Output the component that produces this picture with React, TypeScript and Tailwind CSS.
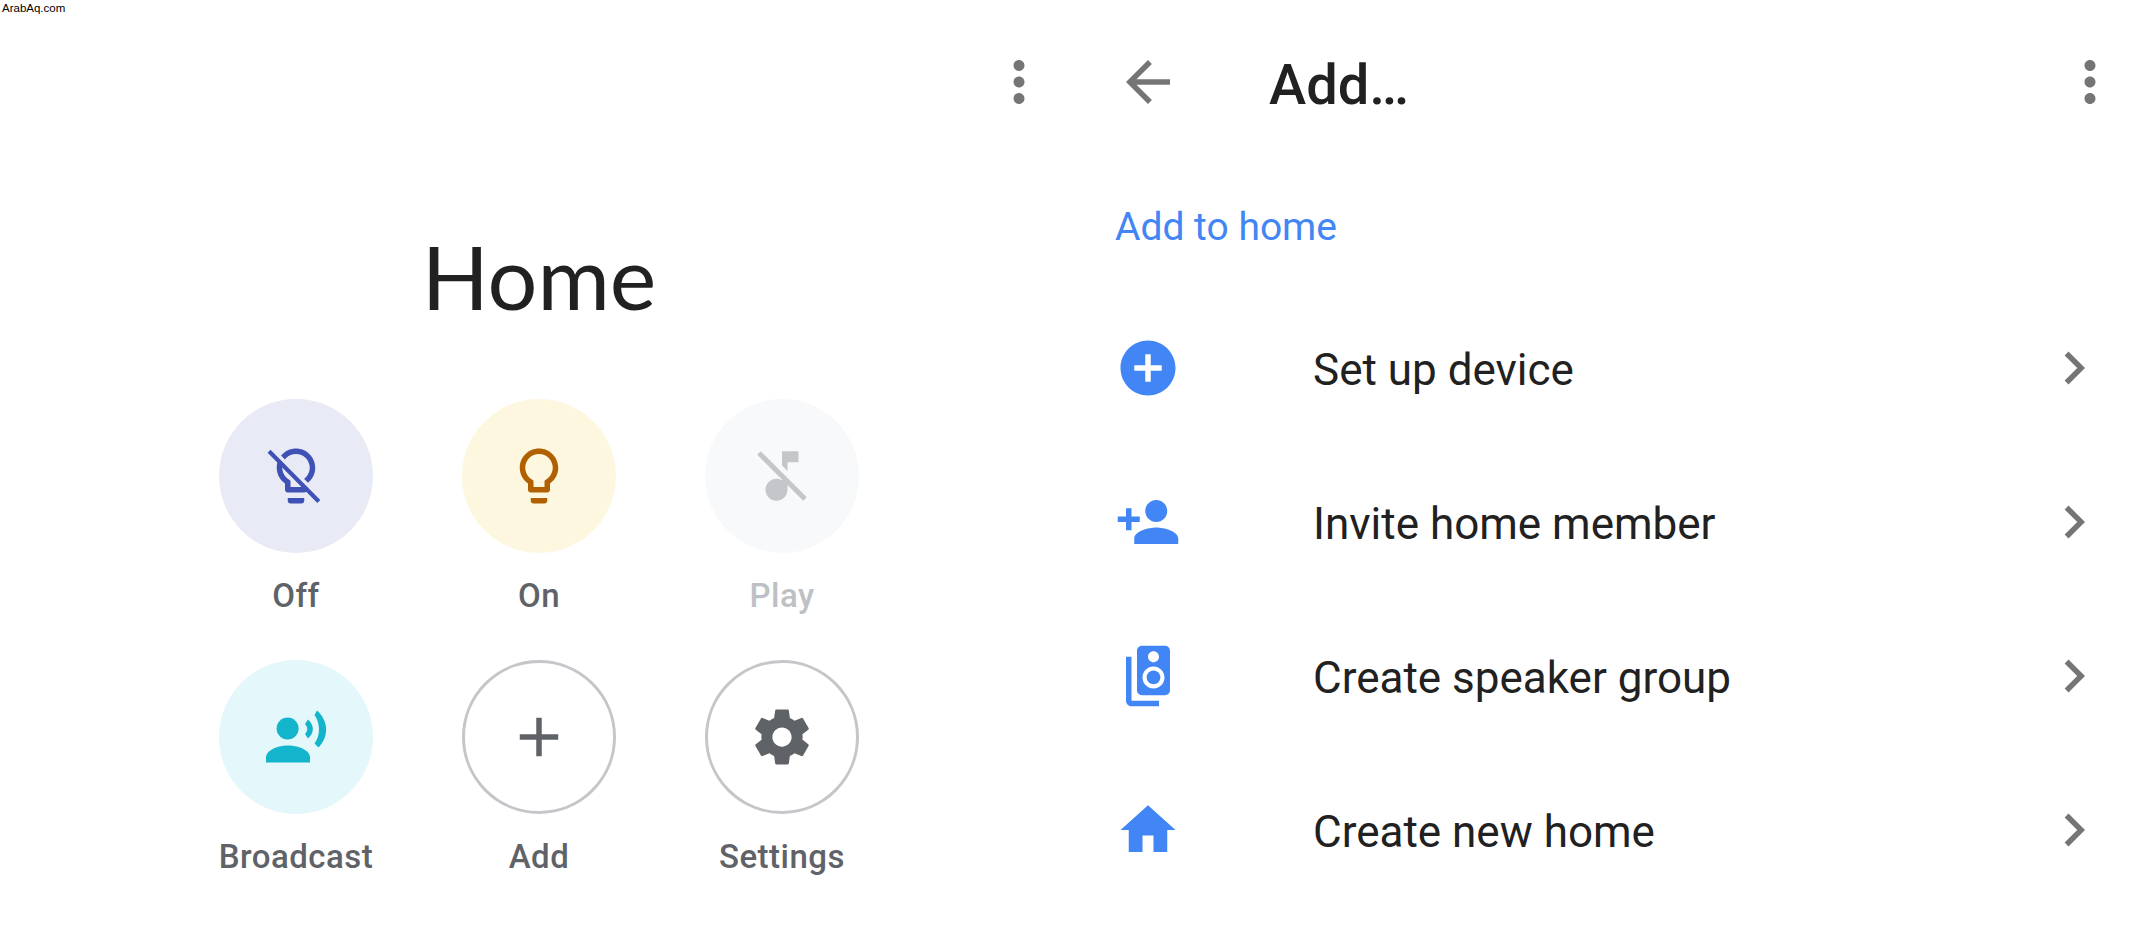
import React from "react";

const P = {
  bulb: "M9 21c0 .55.45 1 1 1h4c.55 0 1-.45 1-1v-1H9v1zm3-19C8.14 2 5 5.14 5 9c0 2.38 1.19 4.47 3 5.74V17c0 .55.45 1 1 1h6c.55 0 1-.45 1-1v-2.26c1.81-1.27 3-3.36 3-5.74 0-3.86-3.14-7-7-7zm2.85 11.1l-.85.6V16h-4v-2.3l-.85-.6C7.8 12.16 7 10.63 7 9c0-2.76 2.24-5 5-5s5 2.24 5 5c0 1.63-.8 3.16-2.15 4.1z",
  musicOff: "M4.27 3L3 4.27l9 9v.28c-.59-.34-1.27-.55-2-.55-2.21 0-4 1.79-4 4s1.79 4 4 4 4-1.79 4-4v-1.73L19.73 21 21 19.73 4.27 3zM14 7h4V3h-6v5.18l2 2z",
  add: "M19 13h-6v6h-2v-6H5v-2h6V5h2v6h6v2z",
  gear: "M19.43 12.98c.04-.32.07-.64.07-.98s-.03-.66-.07-.98l2.11-1.65c.19-.15.24-.42.12-.64l-2-3.46c-.12-.22-.39-.3-.61-.22l-2.49 1c-.52-.4-1.08-.73-1.69-.98l-.38-2.65C14.46 2.18 14.25 2 14 2h-4c-.25 0-.46.18-.49.42l-.38 2.65c-.61.25-1.17.59-1.69.98l-2.49-1c-.23-.09-.49 0-.61.22l-2 3.46c-.13.22-.07.49.12.64l2.11 1.65c-.04.32-.07.65-.07.98s.03.66.07.98l-2.11 1.65c-.19.15-.24.42-.12.64l2 3.46c.12.22.39.3.61.22l2.49-1c.52.4 1.08.73 1.69.98l.38 2.65c.03.24.24.42.49.42h4c.25 0 .46-.18.49-.42l.38-2.65c.61-.25 1.17-.59 1.69-.98l2.49 1c.23.09.49 0 .61-.22l2-3.46c.12-.22.07-.49-.12-.64l-2.01-1.65zM12 15.5c-1.93 0-3.5-1.57-3.5-3.5s1.57-3.5 3.5-3.5 3.5 1.57 3.5 3.5-1.57 3.5-3.5 3.5z",
  addCircle: "M12 2C6.48 2 2 6.48 2 12s4.48 10 10 10 10-4.48 10-10S17.52 2 12 2zm5 11h-4v4h-2v-4H7v-2h4V7h2v4h4v2z",
  personAdd: "M15 12c2.21 0 4-1.79 4-4s-1.79-4-4-4-4 1.79-4 4 1.79 4 4 4zm-9-2V7H4v3H1v2h3v3h2v-3h3v-2H6zm9 4c-2.67 0-8 1.34-8 4v2h16v-2c0-2.66-5.33-4-8-4z",
  speaker: "M18.2 1H9.8C8.81 1 8 1.81 8 2.8v14.4c0 .99.81 1.79 1.8 1.79l8.4.01c.99 0 1.8-.81 1.8-1.8V2.8c0-.99-.81-1.8-1.8-1.8zM14 3c1.1 0 2 .89 2 2s-.9 2-2 2-2-.89-2-2 .9-2 2-2zm0 13.5c-2.21 0-4-1.79-4-4s1.79-4 4-4 4 1.79 4 4-1.79 4-4 4z",
  speaker2: "M6 5H4v16c0 1.1.89 2 2 2h10v-2H6V5z",
  home: "M10 20v-6h4v6h5v-8h3L12 3 2 12h3v8z",
  back: "M20 11H7.83l5.59-5.59L12 4l-8 8 8 8 1.41-1.41L7.83 13H20v-2z",
  kebab: "M12 8c1.1 0 2-.9 2-2s-.9-2-2-2-2 .9-2 2 .9 2 2 2zm0 2c-1.1 0-2 .9-2 2s.9 2 2 2 2-.9 2-2-.9-2-2-2zm0 6c-1.1 0-2 .9-2 2s.9 2 2 2 2-.9 2-2-.9-2-2-2z",
  chevron: "M10 6L8.59 7.41 13.17 12l-4.58 4.59L10 18l6-6z",
};

function Ic({ d, fill, children }: { d?: string; fill: string; children?: React.ReactNode }) {
  return (
    <svg viewBox="0 0 24 24" className="w-[66px] h-[66px] shrink-0" fill={fill}>
      {d && <path d={d} />}
      {children}
    </svg>
  );
}

function Broadcast() {
  return (
    <svg viewBox="0 0 66 66" className="w-[66px] h-[66px]" fill="#12b5cb">
      <circle cx="24.6" cy="24.5" r="11" />
      <path d="M3 58.5v-5c0-7 11-12 22-12s22 5 22 12v5z" />
      <path d="M42 20l3-4.5c6.5 5.5 6.5 13.500 0 19l-3-4.500c3-3 3-7 0-10z" />
      <path d="M51.500 11l2.500-4.500c12 11 12 26 1.500 37l-4-4c6-8 6-20 0-28.500z" />
    </svg>
  );
}

function Tile({ label, circle, labelColor = "text-[#5f6368]", children }: { label: string; circle: string; labelColor?: string; children: React.ReactNode }) {
  return (
    <div className="flex flex-col items-center w-[154px]">
      <div className={`w-[154px] h-[154px] rounded-full flex items-center justify-center ${circle}`}>{children}</div>
      <div className={`mt-[22px] h-[40px] leading-[42px] text-[33px] font-medium tracking-[0.5px] whitespace-nowrap ${labelColor}`}>{label}</div>
    </div>
  );
}

function Row({ d, extra, label }: { d: string; extra?: React.ReactNode; label: string }) {
  return (
    <div className="h-[154px] flex items-center">
      <Ic d={d} fill="#4285f4">{extra}</Ic>
      <div className="ml-[132px] h-[52px] text-[44px] leading-[56px] text-[#212121]">{label}</div>
      <div className="ml-auto mr-[16px]"><Ic d={P.chevron} fill="#757575" /></div>
    </div>
  );
}

export default function App() {
  return (
    <div className="relative w-[2151px] h-[943px] bg-white overflow-hidden flex font-['Roboto',sans-serif]">
      <div className="absolute left-[2px] top-[1px] text-[11.5px] leading-[14px] text-black font-['Liberation_Sans',sans-serif]">ArabAq.com</div>

      <div className="w-[1078px] shrink-0 flex flex-col items-center pt-[49px]">
        <div className="w-full flex justify-end pr-[26px]"><Ic d={P.kebab} fill="#757575" /></div>
        <div className="mt-[113px] text-[88px] leading-[96px] text-[#212121] font-['Lato',sans-serif]">Home</div>
        <div className="mt-[75px] grid grid-cols-[154px_154px_154px] gap-x-[89px] gap-y-[45px]">
          <Tile label="Off" circle="bg-[#e8eaf6]">
            <Ic d={P.bulb} fill="#3f51b5">
              <path d="M3.400 2.400L21.500 20.700" stroke="#e8eaf6" strokeWidth="1.500" />
              <path d="M2.200 3L20.300 21.300" stroke="#3f51b5" strokeWidth="1.500" />
            </Ic>
          </Tile>
          <Tile label="On" circle="bg-[#fef7e0]">
            <Ic d={P.bulb} fill="#b06000" />
          </Tile>
          <Tile label="Play" circle="bg-[#f8f9fa]" labelColor="text-[#bdc1c6]">
            <Ic d={P.musicOff} fill="#c4c6c9" />
          </Tile>
          <Tile label="Broadcast" circle="bg-[#e4f7fb]">
            <Broadcast />
          </Tile>
          <Tile label="Add" circle="border-[3px] border-[#c4c6c9]">
            <Ic d={P.add} fill="#5f6368" />
          </Tile>
          <Tile label="Settings" circle="border-[3px] border-[#c4c6c9]">
            <Ic d={P.gear} fill="#5f6368" />
          </Tile>
        </div>
      </div>

      <div className="flex-1 flex flex-col pt-[49px] pl-[37px] pr-[28px]">
        <div className="h-[66px] flex items-center">
          <Ic d={P.back} fill="#757575" />
          <div className="ml-[88px] h-[66px] text-[56px] leading-[72px] font-medium text-[#212121]">Add…</div>
          <div className="ml-auto"><Ic d={P.kebab} fill="#757575" /></div>
        </div>
        <div className="mt-[87px] h-[48px] text-[39px] leading-[50px] text-[#4285f4]">Add to home</div>
        <div className="mt-[41px] flex flex-col">
          <Row d={P.addCircle} label="Set up device" />
          <Row d={P.personAdd} label="Invite home member" />
          <Row d={P.speaker} extra={<><circle cx="14" cy="12.500" r="2.500" /><path d={P.speaker2} /></>} label="Create speaker group" />
          <Row d={P.home} label="Create new home" />
        </div>
      </div>
    </div>
  );
}
